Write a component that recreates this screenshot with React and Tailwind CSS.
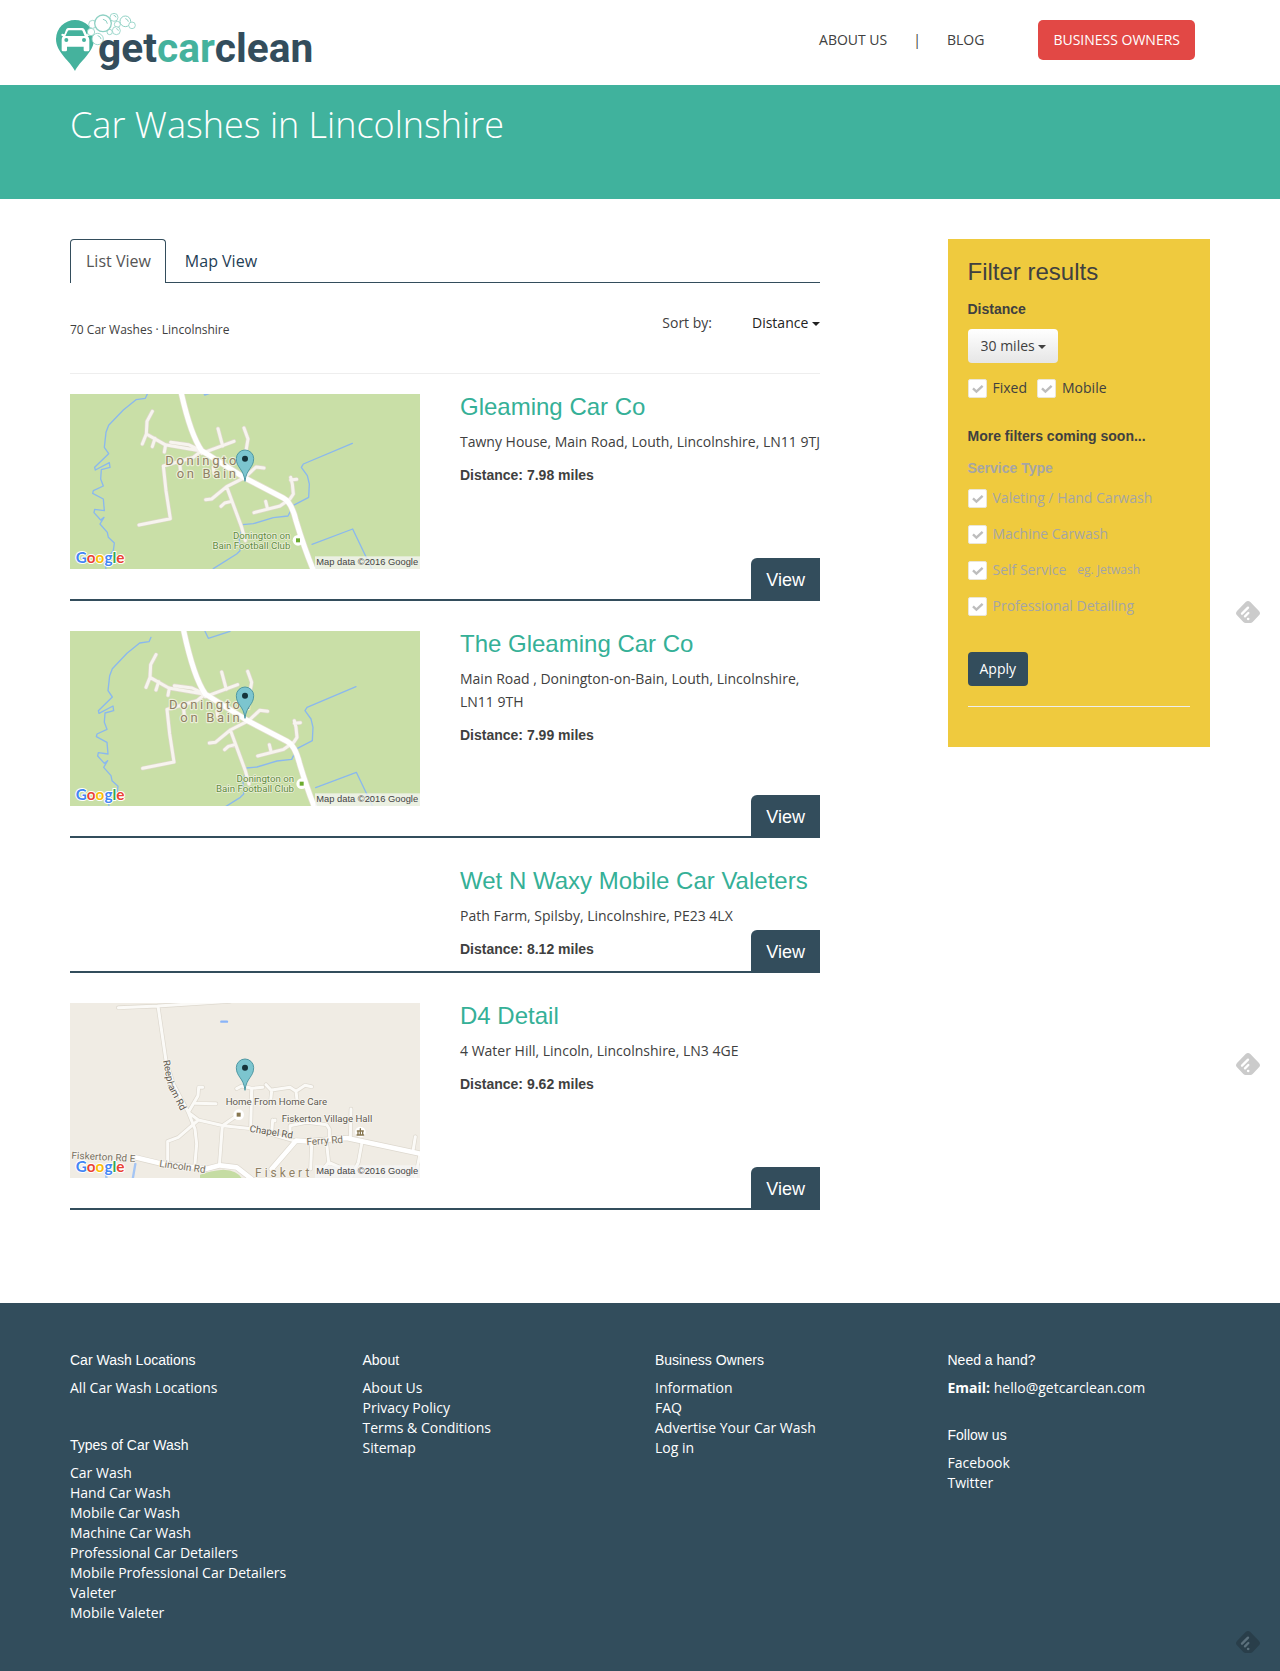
import React from "react";

const sans = "font-['Open_Sans',sans-serif]";
const helv = "font-['Liberation_Sans',sans-serif]";

function Logo() {
  return (
    <svg viewBox="45 36 780 180" className="h-[60px] w-[260px]" role="img" aria-label="getcarclean">
      <path d="M105 213C92 184 48 158 48 117a57 57 0 0 1 114 0c0 41-44 67-57 96Z" fill="#45b29d" />
      <path d="M84 84h43q5 0 7 5l6 14q8-4 9 1 0 4-6 5 5 4 5 10v31q0 4-4 4h-9q-4 0-4-4v-10H81v10q0 4-4 4h-8q-4 0-4-4v-31q0-6 4-10-6-1-5-5 1-5 9-1l5-14q2-5 6-5Z" fill="#fff" />
      <path d="M87 91h37q3 0 4 3l6 14H76l7-14q1-3 4-3Z" fill="#45b29d" />
      <circle cx="79" cy="120" r="6" fill="#45b29d" />
      <circle cx="132" cy="120" r="6" fill="#45b29d" />
      <g fill="#fff" stroke="#8fd1c4" strokeWidth="2.5">
        <circle cx="209" cy="96" r="8" />
        <circle cx="232" cy="73" r="9" />
        <circle cx="229" cy="92" r="12" />
        <circle cx="158" cy="73" r="12" />
        <circle cx="153" cy="96" r="11" />
        <circle cx="189" cy="70" r="25" strokeWidth="4" />
        <circle cx="222" cy="52" r="12" />
        <circle cx="256" cy="64" r="16" strokeWidth="3" />
        <circle cx="276" cy="76" r="10" />
        <circle cx="173" cy="117" r="17" />
      </g>
      <g fill="none" stroke="#8fd1c4" strokeWidth="3" strokeLinecap="round">
        <path d="M190 58q11 2 12 12M257 56q7 2 8 8M222 46q5 1 6 5M174 107q8 2 9 9M230 86q4 1 5 5" />
      </g>
      <text x="174" y="185" fontFamily="Roboto" fontWeight="700" fontSize="122" fill="#334d5c">
        get<tspan fill="#45b29d">car</tspan>clean
      </text>
    </svg>
  );
}

function Caret({ className }) {
  return (
    <svg viewBox="0 0 8 4" className={"pointer-events-none absolute h-1 w-2 " + className} fill="currentColor" aria-hidden="true">
      <path d="M0 0h8L4 4Z" />
    </svg>
  );
}

function FeedlyMark({ className, fill, mark }) {
  return (
    <svg viewBox="0 0 72 66" className={"absolute right-5 h-[22px] w-6 " + className} aria-hidden="true">
      <path d="M29 3q7-6 14 0l26 27q6 7 0 13L50 63q-3 3-7 3H29q-4 0-7-3L3 43q-6-6 0-13Z" fill={fill} />
      <g stroke={mark} strokeWidth="7" strokeLinecap="round" fill="none">
        <path d="M18 38 36 20M27 46l10-10M36 54h1" />
      </g>
    </svg>
  );
}

function MapFrame({ label, background, children }) {
  return (
    <svg viewBox="0 0 1050 525" className="block h-auto w-full" role="img" aria-label={label}>
      <rect width="1050" height="525" fill={background} />
      {children}
      <path d="M525 262C521 224 499 222 499 194a26 26 0 0 1 52 0c0 28-22 30-26 68Z" fill="#7cc5cf" stroke="#4f98a3" strokeWidth="3" />
      <circle cx="525" cy="194" r="9" fill="#15333a" />
      <rect x="735" y="487" width="315" height="38" fill="#f5f5f5" fillOpacity="0.75" />
      <text x="739" y="514" fontFamily="Liberation Sans" fontSize="28" fill="#444">Map data ©2016 Google</text>
      <text x="17" y="508" fontFamily="Lato" fontWeight="700" fontSize="46" stroke="#fff" strokeWidth="6" strokeLinejoin="round" paintOrder="stroke">
        <tspan fill="#4285f4">G</tspan>
        <tspan fill="#ea4335">o</tspan>
        <tspan fill="#fbbc05">o</tspan>
        <tspan fill="#4285f4">g</tspan>
        <tspan fill="#34a853">l</tspan>
        <tspan fill="#ea4335">e</tspan>
      </text>
    </svg>
  );
}

const doningtonLanes =
  "M277 82 261 112 259 150 247 180M259 150 315 182 420 200M285 163 277 188M317 182 313 204M332 175 385 182 420 198M425 200 400 220 310 246 318 320 331 404 237 423M425 208 522 172M474 134 488 186M552 132 564 165 558 200M360 246 362 265M460 250 462 268M612 252 588 249 555 280 500 308 455 345 437 347M500 308 545 430 556 470M483 367 494 357 514 352M582 386 660 366 690 345 700 330 697 300 692 280M692 288 710 286M617 352 622 372";
const doningtonWater =
  "M262 30 256 43 228 47 190 78 146 124 138 145 133 190 146 209 104 250 106 258 148 236 150 250 124 257 122 285 130 306 100 320 98 328 130 345 133 380 104 376 102 386 122 408 132 400 120 420 142 445 145 460 163 477 160 500 135 530 138 556M424 12 434 33 499 12M877 178 730 240 724 250 742 275 748 300 746 340 700 364 684 396 640 401 580 419 548 422 538 465 540 500 530 510 460 554M756 481 878 435 936 556";
const doningtonMain = "M360 10Q390 150 425 200L555 282 670 342Q695 355 708 410 735 500 765 570";

function DoningtonMap({ dx, dy, label }) {
  return (
    <MapFrame label={label} background="#c9dfa7">
      <g transform={`translate(${dx - 30} ${dy - 30})`} fill="none" strokeLinecap="round" strokeLinejoin="round">
        <path d={doningtonWater} stroke="#8ab8ee" strokeWidth="4" />
        <path d={doningtonLanes} stroke="#dcd8c8" strokeWidth="13" />
        <path d={doningtonMain} stroke="#e3dfd0" strokeWidth="19" />
        <path d={doningtonLanes} stroke="#f7f4ef" strokeWidth="9" />
        <path d={doningtonMain} stroke="#fff" strokeWidth="15" />
        <circle cx="714" cy="469" r="16" fill="#fff" />
        <rect x="708" y="463" width="12" height="12" fill="#6cab2f" />
        <g fontFamily="Roboto" paintOrder="stroke" stroke="#f2f2e2" strokeOpacity="0.85">
          <g fontSize="39" fill="#8f8064" strokeWidth="7" letterSpacing="8">
            <text x="316" y="244">Donington</text>
            <text x="350" y="283">on Bain</text>
          </g>
          <g fontSize="29" fill="#5f8c3f" strokeWidth="5" textAnchor="end">
            <text x="691" y="465">Donington on</text>
            <text x="691" y="494">Bain Football Club</text>
          </g>
        </g>
      </g>
    </MapFrame>
  );
}

const fiskertonLanes =
  "M175 41 294 36 510 22M294 36 318 200 340 270 385 355 415 378 490 395 575 404 700 440M428 280 416 280 414 305 385 355M405 328 468 329M385 355 405 405 410 450 404 520M415 378 355 430 323 442V500M487 395 535 362M487 395 478 515M530 284 545 276 575 283 608 280M575 283 572 404M618 272 635 290 632 320M635 288 690 280 708 292 712 325M708 292 735 274 755 278M638 378 636 405M645 378V380M690 415V395L740 385 800 392 808 405V435M873 345 871 435M755 450 752 525M800 450 806 505 785 530M806 505 840 520M906 445 895 505 870 555M1066 428 1060 465M1080 480 1065 555";
const fiskertonMain = "M225 490 300 508 440 524 480 514 530 520 575 555M635 525 708 440 745 442 860 432 1085 480";

function FiskertonMap() {
  return (
    <MapFrame label="Map of Fiskerton" background="#f0ece4">
      <g transform="translate(-30 -27)" fill="none" strokeLinecap="round" strokeLinejoin="round">
        <path d="M420 555V542Q450 530 490 527 535 530 546 555Z" fill="#c5dca3" />
        <path d="M484 83h17" stroke="#8ab4f8" strokeWidth="7" />
        <path d="M226 510 218 556M136 530 140 556" stroke="#a4c5f4" strokeWidth="7" />
        <path d={fiskertonLanes} stroke="#ddd8ce" strokeWidth="13" />
        <path d={fiskertonMain} stroke="#ddd8ce" strokeWidth="18" />
        <path d={fiskertonLanes} stroke="#fbfaf7" strokeWidth="9" />
        <path d={fiskertonMain} stroke="#fff" strokeWidth="14" />
        <circle cx="536" cy="362" r="16" fill="#fff" />
        <rect x="530" y="356" width="12" height="12" fill="#86764f" />
        <circle cx="901" cy="414" r="16" fill="#fff" />
        <path d="M891 423h20M894 411v12M901 404v19M908 411v12M892 411h18" stroke="#86764f" strokeWidth="4" />
        <g fontFamily="Roboto" fontSize="29" fill="#5f594f" paintOrder="stroke" stroke="#f7f5f0" strokeWidth="5">
          <text x="497" y="333">Home From Home Care</text>
          <text x="665" y="385">Fiskerton Village Hall</text>
          <text transform="translate(309 200) rotate(79)">Reeph</text>
          <text transform="translate(324 278) rotate(62)">am Rd</text>
          <text transform="translate(568 413) rotate(9)">Chapel Rd</text>
          <g fontSize="30" fill="#77705f">
            <text transform="translate(740 454) rotate(-4)">Ferry Rd</text>
            <text transform="translate(34 494) rotate(3)">Fiskerton Rd E</text>
            <text transform="translate(297 518) rotate(8)">Lincoln Rd</text>
          </g>
          <text x="585" y="549" fontSize="36" fill="#8f8064" letterSpacing="9">Fiskert</text>
        </g>
      </g>
    </MapFrame>
  );
}

const listings = [
  {
    name: "Gleaming Car Co",
    address: "Tawny House, Main Road, Louth, Lincolnshire, LN11 9TJ",
    miles: "7.98",
    map: <DoningtonMap dx={0} dy={0} label="Map of Donington on Bain" />,
  },
  {
    name: "The Gleaming Car Co",
    address: "Main Road , Donington-on-Bain, Louth, Lincolnshire, LN11 9TH",
    miles: "7.99",
    map: <DoningtonMap dx={11} dy={19} label="Map of Main Road, Donington on Bain" />,
  },
  { name: "Wet N Waxy Mobile Car Valeters", address: "Path Farm, Spilsby, Lincolnshire, PE23 4LX", miles: "8.12" },
  { name: "D4 Detail", address: "4 Water Hill, Lincoln, Lincolnshire, LN3 4GE", miles: "9.62", map: <FiskertonMap /> },
];

function Listing({ item }) {
  return (
    <article className="relative mb-[30px] grid grid-cols-[350fr_360fr] gap-10 border-b-2 border-[#334d5c] pb-2.5">
      <div>{item.map && <div className="mb-5">{item.map}</div>}</div>
      <div>
        <h2 className={helv + " text-2xl leading-[26px] text-[#35b097]"}>
          <a href="#">{item.name}</a>
        </h2>
        <p className="mt-2.5 text-sm leading-[23px]">{item.address}</p>
        <p className={helv + " mt-[11px] text-sm leading-[23px] font-bold"}>Distance: {item.miles} miles</p>
      </div>
      <a
        href="#"
        className={helv + " absolute right-0 -bottom-0.5 rounded-tl-md bg-[#334d5c] px-[15px] pt-[11px] pb-2.5 text-lg leading-[22px] text-white"}
      >
        View
      </a>
    </article>
  );
}

function Check({ label, note }) {
  return (
    <label className="flex items-start text-sm leading-5">
      <span className="relative mt-px mr-1.5 block size-[19px]">
        <input type="checkbox" defaultChecked className="peer block size-[19px] appearance-none rounded-xs border border-[#ebe6d6] bg-white" />
        <svg viewBox="0 0 19 19" className="pointer-events-none absolute inset-0 hidden size-[19px] peer-checked:block" fill="none" stroke="#bdbdbd" strokeWidth="2.4" aria-hidden="true">
          <path d="M5 9.4 8.4 12.6 14.6 6.8" />
        </svg>
      </span>
      {label}
      {note && <span className="ml-[11px] text-xs leading-5">{note}</span>}
    </label>
  );
}

function FooterList({ title, links, className = "" }) {
  return (
    <section className={className}>
      <h3 className={helv + " mb-2 text-sm leading-5"}>{title}</h3>
      <ul>
        {links.map((l) => (
          <li key={l}>
            <a href="#">{l}</a>
          </li>
        ))}
      </ul>
    </section>
  );
}

export default function App() {
  return (
    <div className={sans + " relative bg-white text-[#404040]"}>
      <header className="mx-auto flex w-full max-w-[1140px] items-start justify-between pt-3 pb-[13px]">
        <a href="#" className="-ml-[15px]">
          <Logo />
        </a>
        <nav className="mt-2 mr-[15px] flex items-center text-sm leading-5">
          <a href="#">ABOUT US</a>
          <span className="mx-[26px]">|</span>
          <a href="#">BLOG</a>
          <a href="#" className="ml-[54px] rounded-[5px] bg-[#e24845] px-[15px] py-2.5 text-white">
            BUSINESS OWNERS
          </a>
        </nav>
      </header>

      <div className="bg-[#40b29d]">
        <div className="mx-auto w-full max-w-[1140px] pt-5 pb-[54px]">
          <h1 className="text-4xl leading-10 font-light text-white">Car Washes in Lincolnshire</h1>
        </div>
      </div>

      <main className="mx-auto grid w-full max-w-[1140px] grid-cols-12 gap-x-[30px] pt-10 pb-[63px]">
        <div className="col-span-8">
          <div role="tablist" className="flex gap-[3px] border-b border-[#334d5c] text-base leading-[22px]">
            <button role="tab" aria-selected="true" className="-mb-px rounded-t-[4px] border border-b-0 border-[#334d5c] bg-white pt-2.5 pr-3.5 pb-[11px] pl-[15px] text-[#555]">
              List View
            </button>
            <button role="tab" aria-selected="false" className="px-4 pt-[11px] pb-2.5 text-[#1f4055]">
              Map View
            </button>
          </div>
          <div className="mb-5 flex items-start justify-between border-b border-[#eee] pt-[30px] pb-[35px]">
            <p className="mt-[9px] text-xs leading-4">70 Car Washes · Lincolnshire</p>
            <div className="flex text-sm leading-5">
              <label htmlFor="sort" className="mr-10">
                Sort by:
              </label>
              <span className="relative text-[#222]">
                <select id="sort" className="block h-5 appearance-none bg-transparent pr-[11px]">
                  <option>Distance</option>
                  <option>Name</option>
                </select>
                <Caret className="top-[9px] right-0" />
              </span>
            </div>
          </div>
          {listings.map((item) => (
            <Listing key={item.name} item={item} />
          ))}
        </div>

        <aside className="col-span-3 col-start-10 self-start bg-[#efca3e] px-5 pt-5 pb-10">
          <h2 className={helv + " text-2xl leading-[26px]"}>Filter results</h2>
          <h3 className={helv + " mt-3.5 text-sm leading-5 font-bold"}>Distance</h3>
          <div className="relative mt-2.5 inline-block">
            <select aria-label="Distance" className="block h-[34px] appearance-none rounded-[4px] bg-linear-to-b from-white to-[#e6e6e6] pr-[22px] pl-[13px] text-sm leading-5">
              <option>30 miles</option>
              <option>10 miles</option>
            </select>
            <Caret className="top-4 right-3" />
          </div>
          <div className="mt-[15px] flex gap-2.5">
            <Check label="Fixed" />
            <Check label="Mobile" />
          </div>
          <p className={helv + " mt-7 text-sm leading-5 font-bold"}>More filters coming soon...</p>
          <fieldset className="mt-3 text-[#a5a5a5]">
            <legend className={helv + " mb-2.5 text-sm leading-5 font-bold"}>Service Type</legend>
            <div className="flex flex-col gap-4">
              <Check label="Valeting / Hand Carwash" />
              <Check label="Machine Carwash" />
              <Check label="Self Service" note="eg. Jetwash" />
              <Check label="Professional Detailing" />
            </div>
          </fieldset>
          <button className="mt-9 rounded-[4px] bg-[#334d5c] px-3 py-[7px] text-sm leading-5 font-medium text-white">Apply</button>
          <hr className="mt-5 border-[#eee]" />
        </aside>
      </main>

      <footer className="bg-[#324d5c] text-white">
        <div className="mx-auto grid w-full max-w-[1140px] grid-cols-4 gap-x-[30px] pt-[47px] pb-12 text-sm leading-5">
          <div>
            <FooterList title="Car Wash Locations" links={["All Car Wash Locations"]} />
            <FooterList
              className="mt-[37px]"
              title="Types of Car Wash"
              links={[
                "Car Wash",
                "Hand Car Wash",
                "Mobile Car Wash",
                "Machine Car Wash",
                "Professional Car Detailers",
                "Mobile Professional Car Detailers",
                "Valeter",
                "Mobile Valeter",
              ]}
            />
          </div>
          <FooterList title="About" links={["About Us", "Privacy Policy", "Terms & Conditions", "Sitemap"]} />
          <FooterList title="Business Owners" links={["Information", "FAQ", "Advertise Your Car Wash", "Log in"]} />
          <div>
            <h3 className={helv + " mb-2 text-sm leading-5"}>Need a hand?</h3>
            <p>
              <b>Email:</b> <a href="mailto:hello@getcarclean.com">hello@getcarclean.com</a>
            </p>
            <FooterList className="mt-[27px]" title="Follow us" links={["Facebook", "Twitter"]} />
          </div>
        </div>
      </footer>

      <FeedlyMark className="top-[601px]" fill="#cbcbcb" mark="#fff" />
      <FeedlyMark className="top-[1053px]" fill="#cbcbcb" mark="#fff" />
      <FeedlyMark className="bottom-[18px]" fill="#293e4a" mark="#5c717d" />
    </div>
  );
}
